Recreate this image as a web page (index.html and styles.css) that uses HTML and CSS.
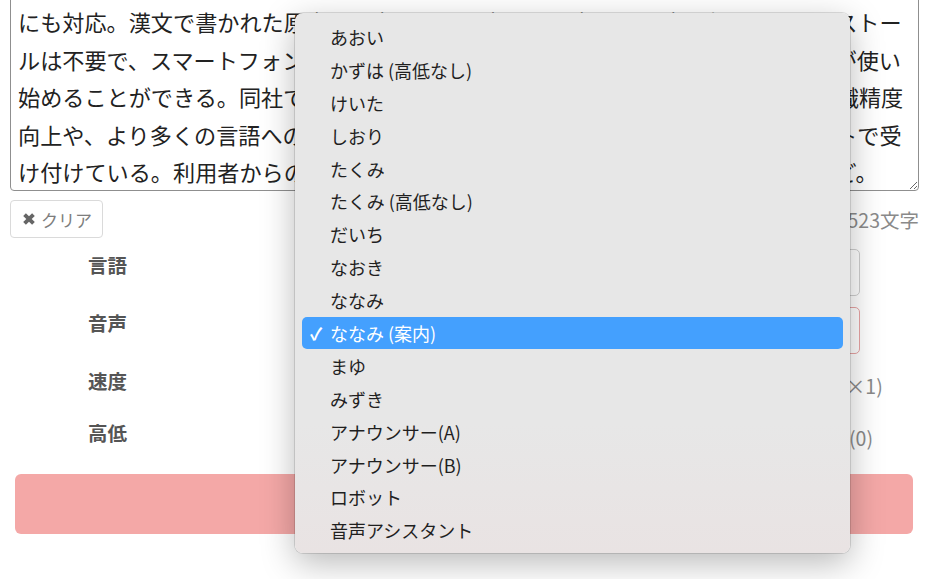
FILE: index.html
```html
<!DOCTYPE html>
<html lang="ja">
<head>
<meta charset="utf-8">
<title>読み上げ</title>
<link rel="stylesheet" href="styles.css">
</head>
<body>
<div class="page">
  <textarea class="text-input">株式会社ボイスラボは、入力した文章を自然な音声で読み上げる新しいウェブサービスを公開した。日本語や英語、中国語、韓国語など多くの言語に加え、古典の漢文や古文などにも対応。漢文で書かれた原文を入力すると、書き下し文にして読み上げる。インストールは不要で、スマートフォンやパソコンのブラウザーから直接アクセスすれば誰もが使い始めることができる。同社では今後、手書きの文字や画像から読み取る際の文字認識精度向上や、より多くの言語への対応を進める予定で、要望や不具合の報告を公式サイトで受け付けている。利用者からの評価も高く、「発音が自然で、とても聞きやすい」など。</textarea>
  <div class="toolbar">
    <button class="btn-clear" type="button">
      <svg class="icon-x" viewBox="0 0 14 14" width="14" height="14" aria-hidden="true"><path d="M1.2 3.9 3.9 1.2 7 4.3 10.1 1.2 12.8 3.9 9.7 7 12.8 10.1 10.1 12.8 7 9.7 3.9 12.8 1.2 10.1 4.3 7Z" fill="#666"/></svg>
      <span>クリア</span>
    </button>
    <span class="count">全1523文字</span>
  </div>
  <form class="form">
    <div class="form-row">
      <label class="label">言語</label>
      <div class="control"><select class="select"><option>日本語</option></select></div>
    </div>
    <div class="form-row">
      <label class="label">音声</label>
      <div class="control"><select class="select select-warn"><option>ななみ (案内)</option></select></div>
    </div>
    <div class="form-row form-row-slim">
      <label class="label">速度</label>
      <div class="control control-slider"><input class="slider" type="range" min="0" max="4" value="2"><span class="value">(×1)</span></div>
    </div>
    <div class="form-row form-row-slim">
      <label class="label">高低</label>
      <div class="control control-slider"><input class="slider" type="range" min="-5" max="5" value="0"><span class="value">(0)</span></div>
    </div>
    <button class="btn-speak" type="button" aria-label="読み上げ"></button>
  </form>
</div>

<div class="menu" role="listbox">
  <div class="menu-item"><span class="check"></span>あおい</div>
  <div class="menu-item"><span class="check"></span>かずは (高低なし)</div>
  <div class="menu-item"><span class="check"></span>けいた</div>
  <div class="menu-item"><span class="check"></span>しおり</div>
  <div class="menu-item"><span class="check"></span>たくみ</div>
  <div class="menu-item"><span class="check"></span>たくみ (高低なし)</div>
  <div class="menu-item"><span class="check"></span>だいち</div>
  <div class="menu-item"><span class="check"></span>なおき</div>
  <div class="menu-item"><span class="check"></span>ななみ</div>
  <div class="menu-item is-selected"><span class="check">✓</span>ななみ (案内)</div>
  <div class="menu-item"><span class="check"></span>まゆ</div>
  <div class="menu-item"><span class="check"></span>みずき</div>
  <div class="menu-item"><span class="check"></span>アナウンサー(A)</div>
  <div class="menu-item"><span class="check"></span>アナウンサー(B)</div>
  <div class="menu-item"><span class="check"></span>ロボット</div>
  <div class="menu-item"><span class="check"></span>音声アシスタント</div>
</div>
</body>
</html>
```
FILE: styles.css
```css
html, body {
  margin: 0;
  padding: 0;
  background: #fff;
  overflow: hidden;
}

body {
  font-family: "Noto Sans CJK JP", "Noto Sans", sans-serif;
  color: #333;
  width: 930px;
  height: 579px;
  position: relative;
}

.page {
  margin-top: -79px;
  padding: 0 11px 0 10px;
}

.text-input {
  display: block;
  box-sizing: border-box;
  width: 909px;
  height: 270px;
  margin: 0;
  padding: 6px 7px 0 7px;
  border: 1px solid #8f8f8f;
  border-radius: 4px;
  font-family: "Noto Sans CJK JP", sans-serif;
  font-size: 22.15px;
  line-height: 37.5px;
  color: #222;
  overflow: hidden;
  text-spacing-trim: space-all;
  background: #fff;
}

.toolbar {
  display: flex;
  justify-content: space-between;
  align-items: center;
  margin-top: 9px;
  height: 38px;
}

.btn-clear {
  display: flex;
  align-items: center;
  gap: 5px;
  box-sizing: border-box;
  height: 38px;
  width: 93px;
  padding: 0 0 0 11px;
  border: 1px solid #dadada;
  border-radius: 4px;
  background: #fff;
  font-family: "Noto Sans CJK JP", sans-serif;
  font-size: 17px;
  color: #7d7d7d;
}

.icon-x {
  display: block;
}

.count {
  font-size: 19.5px;
  color: #8a8a8a;
}

.form {
  display: flex;
  flex-direction: column;
  gap: 11px;
  margin-top: 11px;
}

.form-row {
  display: grid;
  grid-template-columns: 290px 1fr;
  height: 47px;
}

.form-row-slim {
  height: 41px;
}

.label {
  padding: 2px 0 0 78px;
  font-size: 19.5px;
  line-height: 28px;
  font-weight: 700;
  color: #555;
}

.control {
  display: flex;
  align-items: stretch;
  padding-right: 59px;
}

.select {
  flex: 1;
  appearance: none;
  -webkit-appearance: none;
  box-sizing: border-box;
  height: 47px;
  padding: 0 16px;
  border: 1px solid #cfcfcf;
  border-radius: 5px;
  background: #fff;
  font-family: "Noto Sans CJK JP", sans-serif;
  font-size: 19.5px;
  color: #555;
}

.select-warn {
  border-color: #e8a4a4;
}

.control-slider {
  align-items: center;
  padding-right: 19px;
}

.slider {
  flex: 1;
  margin: 0 12px 0 0;
}

.value {
  width: 78px;
  text-align: center;
  font-size: 19.5px;
  color: #8a8a8a;
}

.btn-speak {
  margin: 5px 6px 0 5px;
  height: 60px;
  border: 0;
  border-radius: 6px;
  background: #f4a8a7;
}

/* popup menu of the voice select */
.menu {
  position: absolute;
  left: 295px;
  top: 13px;
  width: 555px;
  box-sizing: border-box;
  padding: 7.5px 7px 6px;
  border-radius: 8px;
  background: linear-gradient(#e7e7e7 0%, #e7e7e7 76%, #e9e3e3 100%);
  box-shadow: 0 0 0 1px rgba(0, 0, 0, 0.12), 0 10px 34px rgba(0, 0, 0, 0.28);
}

.menu-item {
  display: flex;
  align-items: center;
  height: 32.9px;
  padding-left: 8px;
  border-radius: 5px;
  font-size: 18px;
  font-weight: 400;
  color: #1f1f1f;
  white-space: nowrap;
}

.check {
  display: inline-block;
  width: 20px;
  font-size: 17px;
  font-weight: 700;
}

.menu-item.is-selected {
  background: #44a0fe;
  color: #fff;
}
```
